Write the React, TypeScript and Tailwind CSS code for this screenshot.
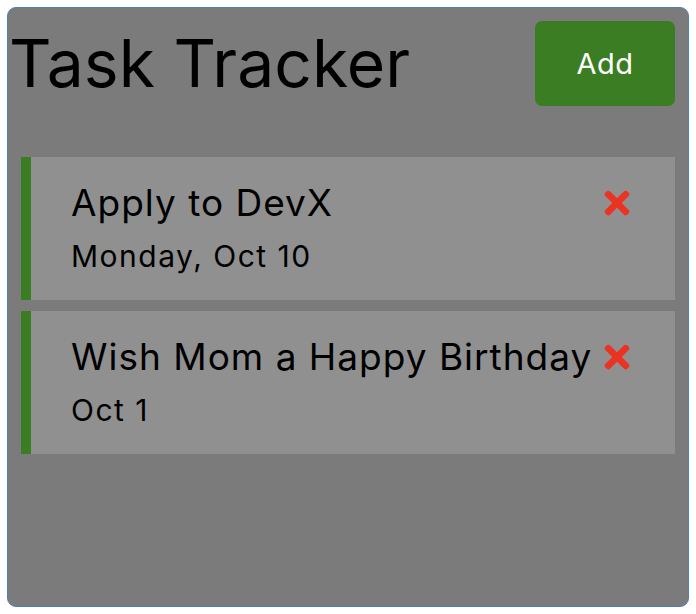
import { FaTimes } from "react-icons/fa";

interface Task {
  id: number;
  text: string;
  day: string;
}

const tasks: Task[] = [
  { id: 1, text: "Apply to DevX", day: "Monday, Oct 10" },
  { id: 2, text: "Wish Mom a Happy Birthday", day: "Oct 1" },
];

const TaskItem = ({ task }: { task: Task }) => {
  return (
    <div className="h-[143px] bg-[#909090] border-l-[10px] border-[#3a7d22] pl-[40px] pt-[22px]">
      <h3 className="flex items-center justify-between pr-[40px] text-[37px] leading-[48px] tracking-[1px] text-black">
        <span>{task.text}</span>
        <FaTimes className="shrink-0 text-[#ea3323] cursor-pointer" size={36} />
      </h3>
      <p className="text-[30px] leading-[40px] mt-[9px] tracking-[1.5px] text-black">{task.day}</p>
    </div>
  );
};

const App = () => {
  return (
    <div className="w-[696px] h-[614px] p-[7px] font-['Inter',sans-serif]">
      <div className="h-[600px] rounded-[9px] border border-[#4a80b5] bg-[#7b7b7b]">
        <header className="flex items-center justify-between pl-[1px] pr-[13px] pt-[13px]">
          <h1 className="text-[66px] leading-[85px] tracking-[0px] text-black">Task Tracker</h1>
          <button className="w-[140px] h-[85px] rounded-[7px] bg-[#3a7d22] text-white text-[29px] tracking-[0.5px]">
            Add
          </button>
        </header>

        <div className="mt-[51px] px-[13px] flex flex-col gap-[11px]">
          {tasks.map((task) => (
            <TaskItem key={task.id} task={task} />
          ))}
        </div>
      </div>
    </div>
  );
};

export default App;
